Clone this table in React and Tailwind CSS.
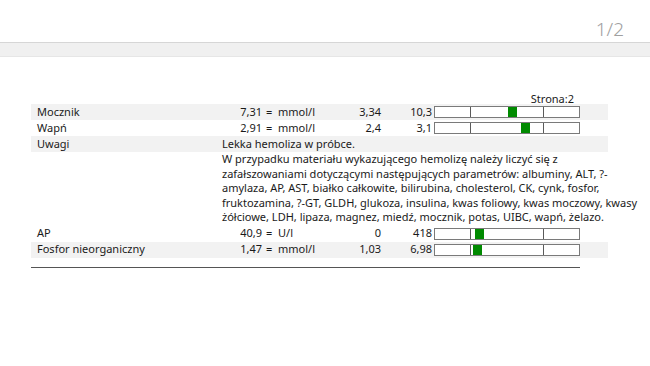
const ROWS_TOP = [
  { name: "Mocznik", value: "7,31", unit: "mmol/l", low: "3,34", high: "10,3", pos: 73, shade: true },
  { name: "Wapń", value: "2,91", unit: "mmol/l", low: "2,4", high: "3,1", pos: 86, shade: false },
];

const ROWS_BOTTOM = [
  { name: "AP", value: "40,9", unit: "U/l", low: "0", high: "418", pos: 40, shade: false },
  { name: "Fosfor nieorganiczny", value: "1,47", unit: "mmol/l", low: "1,03", high: "6,98", pos: 38, shade: true },
];

const NOTE_LINES = [
  "W przypadku materiału wykazującego hemolizę należy liczyć się z",
  "zafałszowaniami dotyczącymi następujących parametrów: albuminy, ALT, ?-",
  "amylaza, AP, AST, białko całkowite, bilirubina, cholesterol, CK, cynk, fosfor,",
  "fruktozamina, ?-GT, GLDH, glukoza, insulina, kwas foliowy, kwas moczowy, kwasy",
  "żółciowe, LDH, lipaza, magnez, miedź, mocznik, potas, UIBC, wapń, żelazo.",
];

function RangeBar({ pos }) {
  return (
    <div className="relative flex h-[12px] w-[146px] border border-[#7a7a7a] bg-white">
      <div className="w-[36px] border-r border-[#5a5a5a]" />
      <div className="w-[73px] border-r border-[#5a5a5a]" />
      <div className="flex-1" />
      <div className="absolute top-0 bottom-0 w-[9px] bg-[#008a00]" style={{ left: pos }} />
    </div>
  );
}

function ResultRow({ row }) {
  return (
    <div className={`flex h-[16px] items-center ${row.shade ? "bg-[#f2f2f2]" : ""}`}>
      <div className="w-[181px] pl-[6px]">{row.name}</div>
      <div className="w-[50px] text-right">{row.value}</div>
      <div className="w-[16px] pl-[4px]">=</div>
      <div className="w-[56px]">{row.unit}</div>
      <div className="w-[47px] text-right">{row.low}</div>
      <div className="w-[51px] text-right">{row.high}</div>
      <div className="ml-[2px]">
        <RangeBar pos={row.pos} />
      </div>
    </div>
  );
}

export default function App() {
  return (
    <div
      className="relative h-[366px] w-[650px] overflow-hidden bg-white text-[11px] text-[#1a1a1a]"
      style={{ fontFamily: '"Noto Sans", "Open Sans", sans-serif' }}
    >
      <div className="flex h-[42px] items-end justify-end pb-[3px] pr-[26px]">
        <span className="text-[19px] font-light leading-none text-[#a0a0a0]">1/2</span>
      </div>
      <div className="h-[15px] border-y border-t-[#d6d6d6] border-b-[#e6e6e6] bg-[#f0f0f0]" />

      <div className="ml-[31px] mt-[34px] w-[577px]">
        <div className="flex h-[13px] items-end justify-end pr-[34px] leading-none">Strona:2</div>

        {ROWS_TOP.map((row) => (
          <ResultRow key={row.name} row={row} />
        ))}

        <div className="flex h-[16px] items-center bg-[#f2f2f2]">
          <div className="w-[191px] pl-[6px]">Uwagi</div>
          <div>Lekka hemoliza w próbce.</div>
        </div>
        <div className="pb-[1px] pl-[191px] leading-[14.5px]">
          {NOTE_LINES.map((line) => (
            <div key={line} className="whitespace-nowrap">
              {line}
            </div>
          ))}
        </div>

        {ROWS_BOTTOM.map((row) => (
          <ResultRow key={row.name} row={row} />
        ))}

        <div className="mt-[9px] h-px w-[549px] bg-[#555555]" />
      </div>
    </div>
  );
}
